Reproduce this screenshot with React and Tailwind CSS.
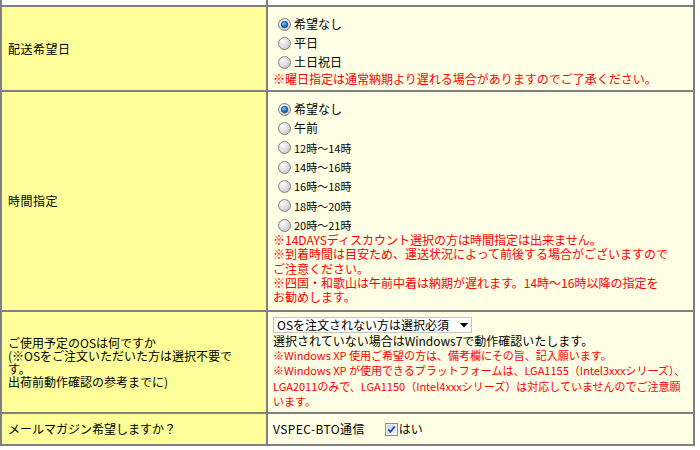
import React from "react";

const Radio = ({ checked }) => (
  <svg width="13" height="13" viewBox="0 0 13 13" className="shrink-0">
    <defs>
      <radialGradient id="rg" cx="0.35" cy="0.3" r="0.85">
        <stop offset="0" stopColor="#fbfbfb" />
        <stop offset="0.55" stopColor="#dcdcdc" />
        <stop offset="1" stopColor="#b5b5b5" />
      </radialGradient>
      <radialGradient id="bg" cx="0.4" cy="0.35" r="0.7">
        <stop offset="0" stopColor="#8fd0ff" />
        <stop offset="0.5" stopColor="#2a86d4" />
        <stop offset="1" stopColor="#0b4f95" />
      </radialGradient>
    </defs>
    <circle cx="6.5" cy="6.5" r="6" fill="url(#rg)" stroke="#858585" strokeWidth="1" />
    {checked && <circle cx="6.5" cy="6.5" r="3.2" fill="url(#bg)" stroke="#1d3f66" strokeWidth="0.8" />}
  </svg>
);

const Checkbox = () => (
  <svg width="13" height="13" viewBox="0 0 13 13" className="shrink-0">
    <defs>
      <linearGradient id="cb" x1="0" y1="0" x2="1" y2="1">
        <stop offset="0" stopColor="#c9d3ea" />
        <stop offset="1" stopColor="#f3f5fb" />
      </linearGradient>
    </defs>
    <rect x="0.5" y="0.5" width="12" height="12" fill="#f5f5f5" stroke="#8e8f8f" />
    <rect x="2" y="2" width="9" height="9" fill="url(#cb)" />
    <path d="M3.2 6.4 L5.4 8.8 L9.8 3.4" fill="none" stroke="#2a4fa8" strokeWidth="1.8" />
  </svg>
);

const RadioLine = ({ checked, children, small, h }) => (
  <div className={`flex items-center ${h}`}>
    <span className="ml-[5px] flex">
      <Radio checked={checked} />
    </span>
    <span className={`ml-[3px] whitespace-nowrap ${small ? "text-[11px]" : "text-[12px]"}`}>{children}</span>
  </div>
);

export default function App() {
  return (
    <div
      className="w-[700px] h-[450px] bg-white text-black overflow-hidden"
      style={{ fontFamily: '"Noto Sans CJK JP", "Noto Sans", sans-serif' }}
    >
      <div className="w-[695px] border-x-2 border-b-2 border-[#808080]">
        {/* previous row (white) */}
        <div className="flex h-[5px]">
          <div className="w-[266px] bg-white border-r-2 border-[#808080]" />
          <div className="flex-1 bg-white" />
        </div>

        {/* 配送希望日 */}
        <div className="flex h-[85px] border-t-2 border-[#808080]">
          <div className="w-[266px] shrink-0 bg-[#ffff99] border-r-2 border-[#808080] flex items-center px-[6px] text-[12px] tracking-[0.5px]">
            配送希望日
          </div>
          <div className="flex-1 bg-[#ffffe6] pl-[5px] pt-[7.5px] flex flex-col">
            <RadioLine checked h="h-[19px]">希望なし</RadioLine>
            <RadioLine h="h-[19px]">平日</RadioLine>
            <RadioLine h="h-[19px]">土日祝日</RadioLine>
            <div className="text-[12px] leading-[14px] text-[#ff0000] whitespace-nowrap">
              ※曜日指定は通常納期より遅れる場合がありますのでご了承ください。
            </div>
          </div>
        </div>

        {/* 時間指定 */}
        <div className="flex h-[220px] border-t-2 border-[#808080]">
          <div className="w-[266px] shrink-0 bg-[#ffff99] border-r-2 border-[#808080] flex items-center px-[6px] text-[12px] tracking-[0.5px]">
            時間指定
          </div>
          <div className="flex-1 bg-[#ffffe6] pl-[5px] pt-[7.5px] flex flex-col">
            <RadioLine checked h="h-[19.33px]">希望なし</RadioLine>
            <RadioLine h="h-[19.33px]">午前</RadioLine>
            <RadioLine small h="h-[19.33px]">12時～14時</RadioLine>
            <RadioLine small h="h-[19.33px]">14時～16時</RadioLine>
            <RadioLine small h="h-[19.33px]">16時～18時</RadioLine>
            <RadioLine small h="h-[19.33px]">18時～20時</RadioLine>
            <RadioLine small h="h-[19.33px]">20時～21時</RadioLine>
            <div className="mt-[-2px] text-[12px] leading-[14.4px] text-[#ff0000] whitespace-nowrap">
              <div>※14DAYSディスカウント選択の方は時間指定は出来ません。</div>
              <div>※到着時間は目安ため、運送状況によって前後する場合がございますので</div>
              <div>ご注意ください。</div>
              <div>※四国・和歌山は午前中着は納期が遅れます。14時～16時以降の指定を</div>
              <div>お勧めします。</div>
            </div>
          </div>
        </div>

        {/* OS */}
        <div className="flex h-[102px] border-t-2 border-[#808080]">
          <div className="w-[266px] shrink-0 bg-[#ffff99] border-r-2 border-[#808080] flex items-center px-[6px] text-[12px] leading-[13px] whitespace-nowrap">
            <div>
              <div>ご使用予定のOSは何ですか</div>
              <div>(※OSをご注文いただいた方は選択不要で</div>
              <div>す。</div>
              <div>出荷前動作確認の参考までに)</div>
            </div>
          </div>
          <div className="flex-1 bg-[#ffffe6] pl-[5px] pt-[5px] flex flex-col">
            <div className="w-[199px] h-[16px] border border-[#c4c4c4] bg-white flex items-center justify-between pl-[3px] pr-[2px] text-[12px] leading-none whitespace-nowrap">
              <span>OSを注文されない方は選択必須</span>
              <svg width="8" height="5" viewBox="0 0 8 5" className="mr-[1px] mt-[1px]">
                <path d="M0 0 H8 L4 4.5 Z" fill="#000" />
              </svg>
            </div>
            <div className="h-[14px] mt-[1px] flex items-center text-[12px] whitespace-nowrap">
              選択されていない場合はWindows7で動作確認いたします。
            </div>
            <div className="text-[11px] leading-[15.3px] text-[#ff0000] whitespace-nowrap">
              <div>※Windows XP 使用ご希望の方は、備考欄にその旨、記入願います。</div>
              <div>※Windows XP が使用できるプラットフォームは、LGA1155（Intel3xxxシリーズ）、</div>
              <div>LGA2011のみで、LGA1150（Intel4xxxシリーズ）は対応していませんのでご注意願</div>
              <div>います。</div>
            </div>
          </div>
        </div>

        {/* メールマガジン */}
        <div className="flex h-[32px] border-t-2 border-[#808080]">
          <div className="w-[266px] shrink-0 bg-[#ffff99] border-r-2 border-[#808080] flex items-center px-[6px] text-[12px]">
            メールマガジン希望しますか？
          </div>
          <div className="flex-1 bg-[#ffffe6] pl-[5px] flex items-center text-[12px] whitespace-nowrap">
            <span className="tracking-[0.4px]">VSPEC-BTO通信</span>
            <span className="ml-[20px] flex">
              <Checkbox />
            </span>
            <span className="ml-[1px]">はい</span>
          </div>
        </div>
      </div>
    </div>
  );
}
